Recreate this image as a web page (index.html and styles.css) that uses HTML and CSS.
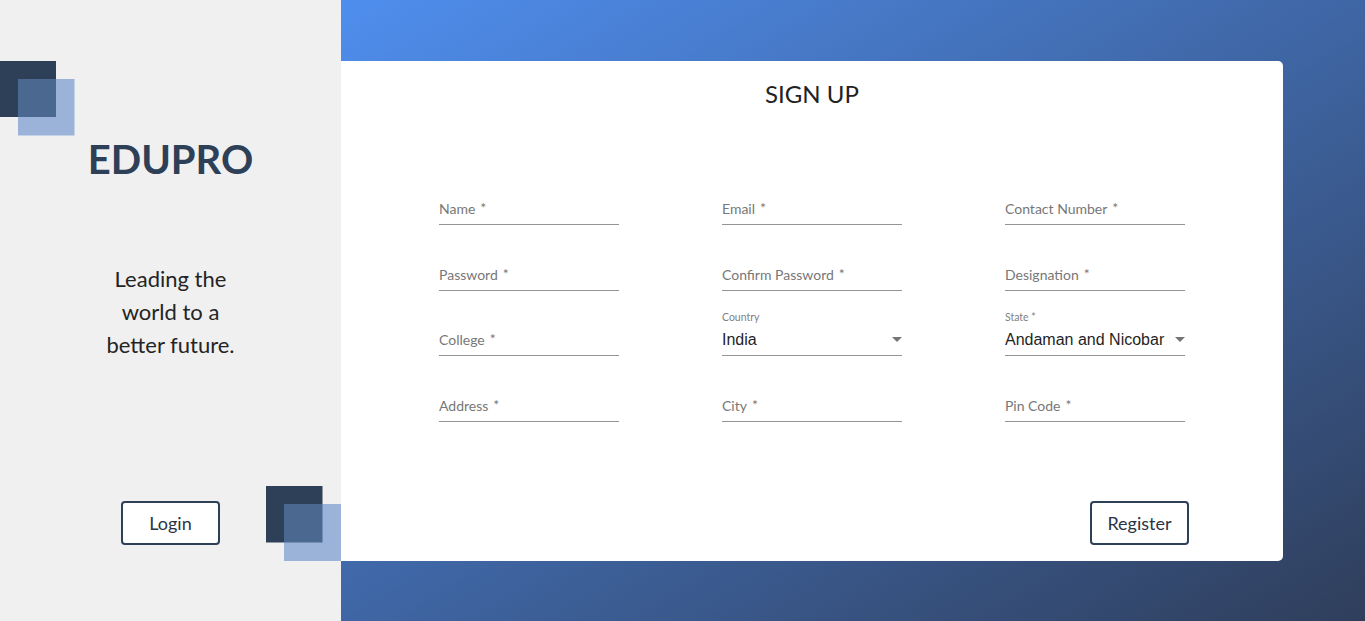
FILE: index.html
```html
<!DOCTYPE html>
<html lang="en">
<head>
<meta charset="utf-8">
<title>EDUPRO - Sign Up</title>
<link rel="stylesheet" href="styles.css">
</head>
<body>
<div class="page">
  <aside class="side">
    <svg class="squares squares-top" width="75" height="75" viewBox="0 0 75 75">
      <rect x="0" y="0" width="56" height="56" fill="#2e3f58"/>
      <rect x="18" y="18" width="56.5" height="56.5" fill="#9cb3d9"/>
      <rect x="18" y="18" width="38" height="38" fill="#4a6890"/>
    </svg>
    <svg class="squares squares-bottom" width="75" height="75" viewBox="0 0 75 75">
      <rect x="0" y="0" width="56.5" height="56.5" fill="#2e3f58"/>
      <rect x="18" y="18" width="57" height="57" fill="#9cb3d9"/>
      <rect x="18" y="18" width="38.5" height="38.5" fill="#4a6890"/>
    </svg>
    <h1 class="brand">EDUPRO</h1>
    <p class="tagline">Leading the world to a better future.</p>
    <button class="btn btn-login" type="button">Login</button>
  </aside>
  <main class="stage">
    <section class="card">
      <h2 class="title">SIGN UP</h2>
      <div class="fields">
        <div class="field"><span class="label">Name<span class="req">*</span></span></div>
        <div class="field"><span class="label">Email<span class="req">*</span></span></div>
        <div class="field"><span class="label">Contact Number<span class="req">*</span></span></div>
        <div class="field"><span class="label">Password<span class="req">*</span></span></div>
        <div class="field"><span class="label">Confirm Password<span class="req">*</span></span></div>
        <div class="field"><span class="label">Designation<span class="req">*</span></span></div>
        <div class="field"><span class="label">College<span class="req">*</span></span></div>
        <div class="field select">
          <span class="small-label">Country</span>
          <span class="value">India</span>
          <svg class="arrow" width="10" height="5" viewBox="0 0 10 5"><path d="M0 0l5 5 5-5z" fill="rgba(0,0,0,0.54)"/></svg>
        </div>
        <div class="field select">
          <span class="small-label">State *</span>
          <span class="value">Andaman and Nicobar Islands</span>
          <svg class="arrow" width="10" height="5" viewBox="0 0 10 5"><path d="M0 0l5 5 5-5z" fill="rgba(0,0,0,0.54)"/></svg>
        </div>
        <div class="field"><span class="label">Address<span class="req">*</span></span></div>
        <div class="field"><span class="label">City<span class="req">*</span></span></div>
        <div class="field"><span class="label">Pin Code<span class="req">*</span></span></div>
      </div>
      <div class="actions">
        <button class="btn" type="button">Register</button>
      </div>
    </section>
  </main>
</div>
</body>
</html>
```

FILE: styles.css
```css
* { box-sizing: border-box; }
html, body { margin: 0; padding: 0; }
body {
  font-family: "Lato", "Liberation Sans", sans-serif;
  width: 1365px;
  height: 621px;
  overflow: hidden;
}
.page {
  display: flex;
  height: 621px;
}
.side {
  position: relative;
  width: 341px;
  flex: none;
  background: #f0f0f0;
  display: flex;
  flex-direction: column;
  align-items: center;
  padding-top: 135px;
  z-index: 2;
}
.squares { position: absolute; display: block; }
.squares-top { left: 0; top: 61px; }
.squares-bottom { left: 266px; top: 486px; }
.brand {
  margin: 0;
  font-size: 40px;
  line-height: 48px;
  font-weight: 700;
  color: #2e3f58;
}
.tagline {
  margin: 79px 0 0;
  width: 150px;
  text-align: center;
  font-size: 22px;
  line-height: 33px;
  color: #242424;
}
.btn {
  width: 99px;
  height: 44px;
  border: 2px solid #2e3f58;
  border-radius: 4px;
  background: #fff;
  font-family: "Lato", "Liberation Sans", sans-serif;
  font-size: 18px;
  color: #2b3445;
  padding: 0;
}
.btn-login { margin-top: 140px; }
.stage {
  flex: 1;
  background: linear-gradient(to bottom right, #4f8eee, #2f3e5b);
  padding-top: 61px;
}
.card {
  width: 942px;
  height: 500px;
  background: #fff;
  border-radius: 0 5px 5px 0;
  display: flex;
  flex-direction: column;
  padding-top: 18px;
}
.title {
  margin: 0;
  text-align: center;
  font-size: 24px;
  line-height: 29px;
  font-weight: 400;
  color: #222;
}
.fields {
  margin-top: 69px;
  display: grid;
  grid-template-columns: repeat(3, 180px);
  grid-auto-rows: 48px;
  column-gap: 103px;
  row-gap: 17.67px;
  justify-content: center;
}
.field {
  position: relative;
  display: flex;
  flex-direction: column;
  justify-content: flex-end;
  border-bottom: 1px solid rgba(0,0,0,0.42);
}
.label {
  font-size: 14px;
  line-height: 16px;
  padding-bottom: 7px;
  color: #777;
}
.req {
  margin-left: 5px;
  font-size: 14px;
  position: relative;
  top: -1px;
}
.small-label {
  font-family: "Lato", "Liberation Sans", sans-serif;
  font-size: 10.5px;
  line-height: 13px;
  color: #7f7f7f;
  margin-bottom: 6px;
}
.value {
  font-family: "Liberation Sans", Arial, sans-serif;
  font-size: 16px;
  line-height: 19px;
  padding-bottom: 6px;
  width: 165px;
  color: #1f1f1f;
  white-space: nowrap;
  overflow: hidden;
}
.arrow {
  position: absolute;
  right: 0;
  bottom: 13px;
}
.actions {
  margin-top: auto;
  display: flex;
  justify-content: flex-end;
  padding: 0 94px 16px 0;
}
```
